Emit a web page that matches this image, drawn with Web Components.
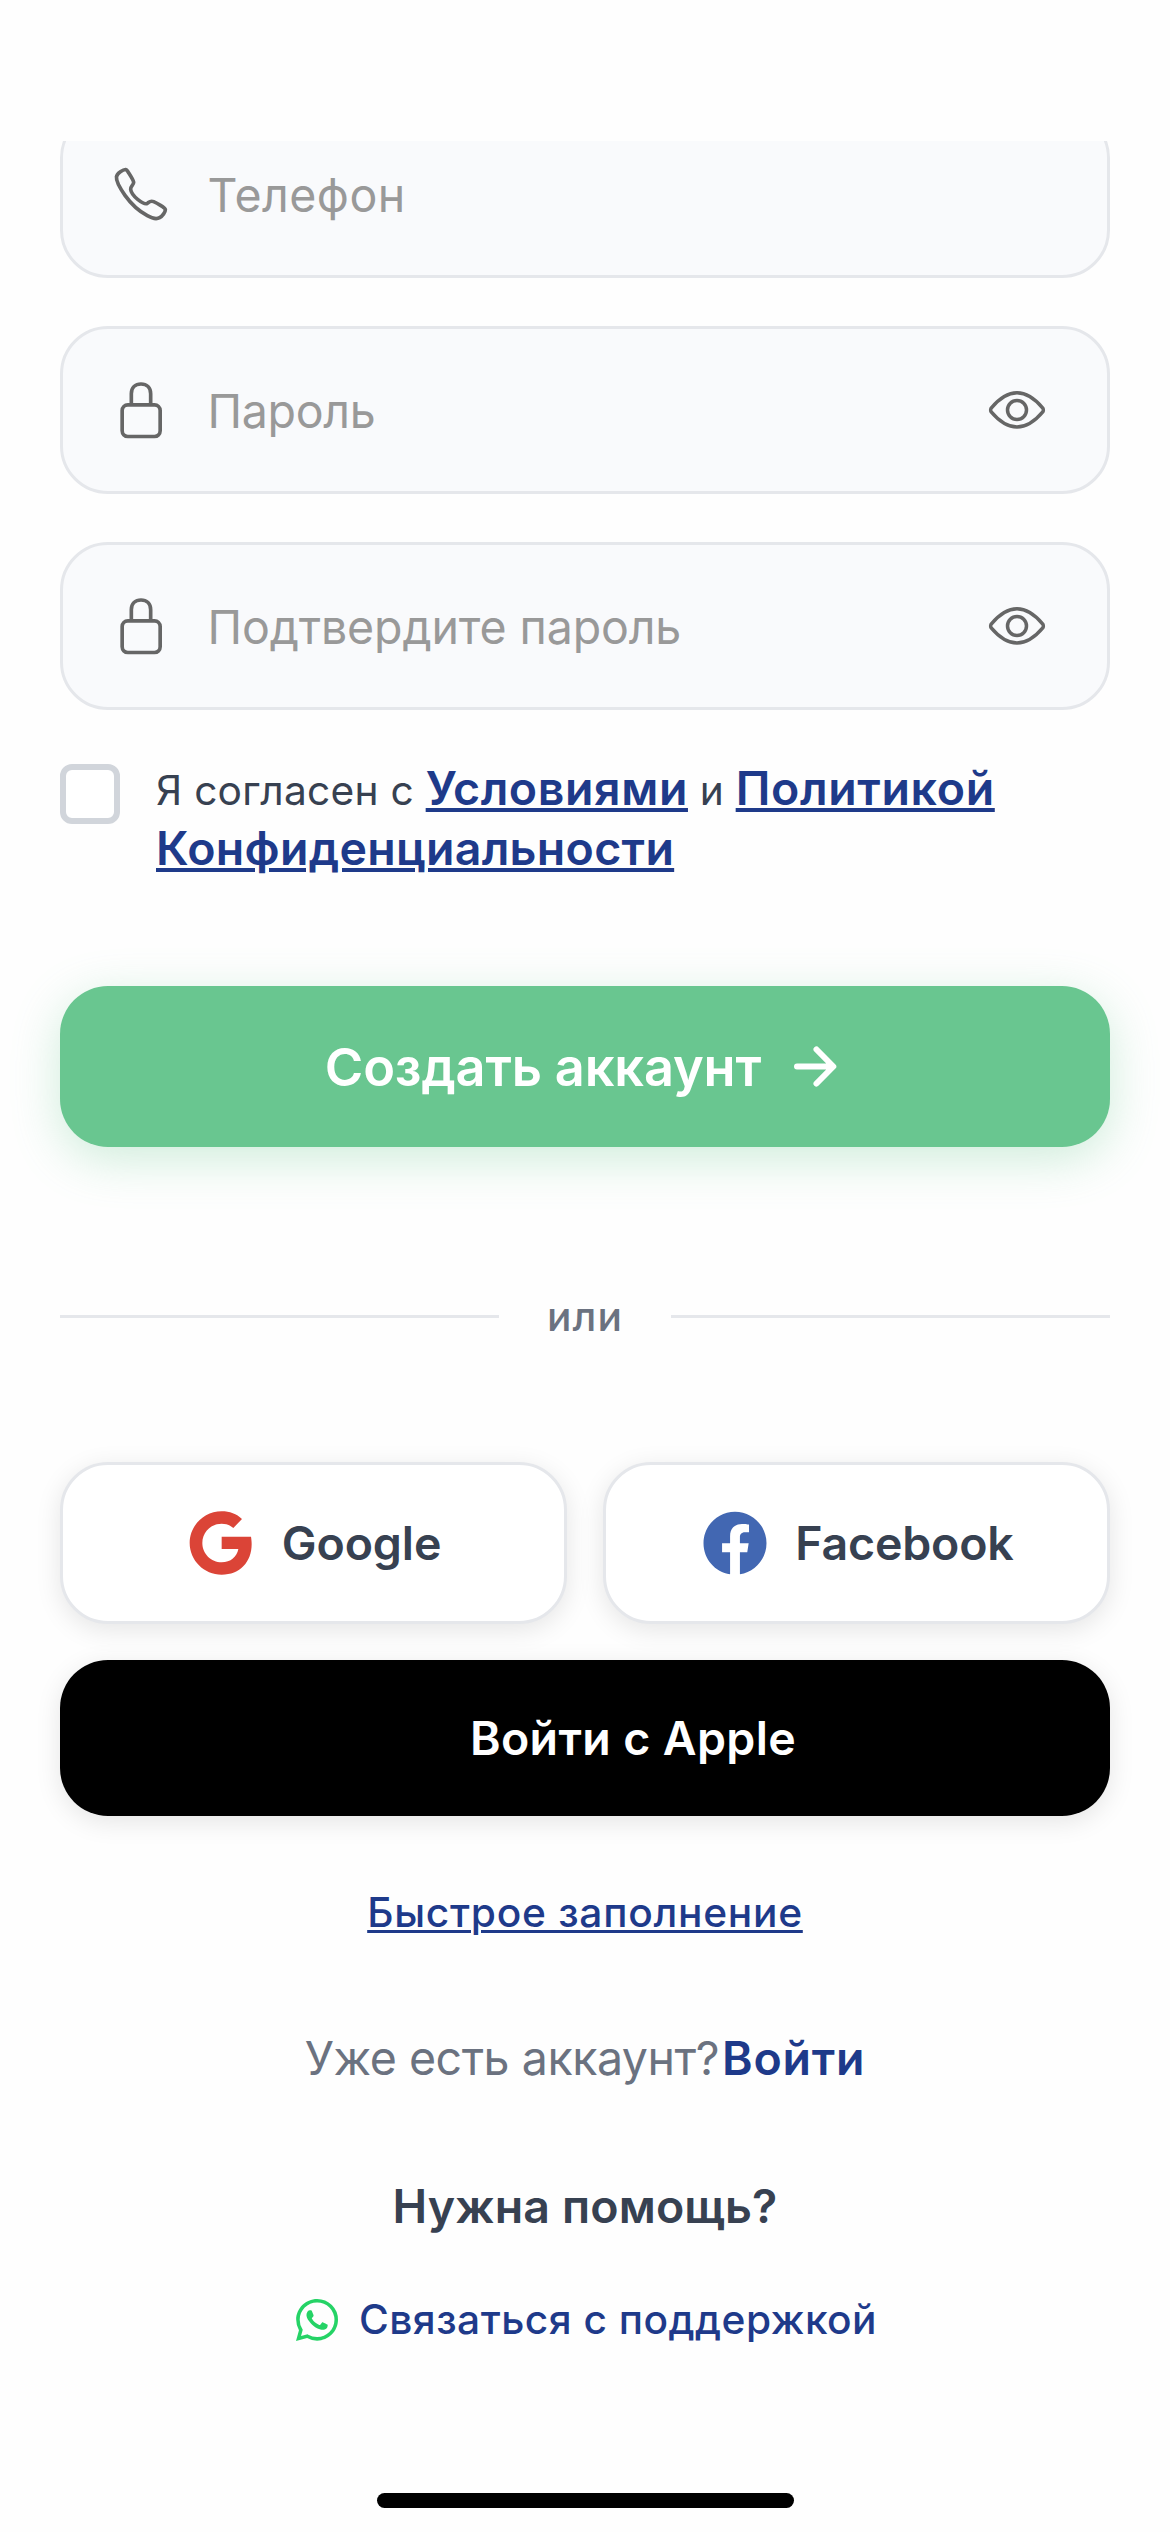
<!DOCTYPE html>
<html lang="ru">
<head>
<meta charset="utf-8">
<title>Создать аккаунт</title>
<style>
  html, body { margin: 0; padding: 0; background: #fff; }
  body { font-family: Inter, "Liberation Sans", sans-serif; color: #374151; }
</style>
</head>
<body>
<sign-up-screen></sign-up-screen>

<script>
const define = (name, html) => {
  const tpl = document.createElement('template');
  tpl.innerHTML = html;
  customElements.define(name, class extends HTMLElement {
    constructor() {
      super();
      this.attachShadow({ mode: 'open' }).appendChild(tpl.content.cloneNode(true));
    }
  });
};

const icons = {
  phone: { size: 60, box: '213 132 180 180', body: `<path fill="none" stroke="#666" stroke-width="11" stroke-linejoin="round" d="M257 148.500C251 148 230 159 229.500 171C228 183 239 203 255 226C275 254 300 275 322 287C336 295 350 298 359 293C368 288 376 276 376 269C375 263 350 249 341 245C331 241 329 245 322 250C315 254 303 246 293 238C282 229 273 217 272 208C271 199 281 196 281 187C280 179 268 162 263 154Q260 149 257 148.500Z"/>` },
  lock: { size: 60, box: '213 779 180 180', body: `<g fill="none" stroke="#666" stroke-width="11"><rect x="246.500" y="853.500" width="114" height="95" rx="17"/><path d="M274 853V820C274 802 286 791 303 791S332 802 332 820V853"/></g>` },
  eye: { size: 60, box: '261 240 180 180', body: `<g fill="none" stroke="#666" stroke-width="10.500" stroke-linejoin="round"><path d="M273 325C299 294 323 278.500 351 278.500S403 294 429 325Q431 330 429 335C403 366 379 381 351 381S299 366 273 335Q271 330 273 325Z"/><circle cx="351" cy="330" r="28.500"/></g>` },
  arrow: { size: 60, box: '787 1036.500 60 60', body: `<path fill="none" stroke="#fff" stroke-width="6" stroke-linecap="round" stroke-linejoin="round" d="M799 1066H835M818.500 1049L835.300 1066L818.500 1083"/>` },
  google: { size: 72, box: '16 21 216 216', body: `<path fill="#DB4437" d="M184 57C168 42 147 34 123 34C70 34 27 77 27 129C27 181 70 224 123 224C178 224 213 186 213 132C213 124 212 116 211 110H123V147H173C169 170 150 187 123 187C91 187 65 161 65 129C65 97 91 71 123 71C137 71 149 76 158 84Z"/>` },
  facebook: { size: 72, box: '0 0 512 512', body: `<path fill="#4267B2" d="M480 257.350c0-123.700-100.300-224-224-224s-224 100.300-224 224c0 111.800 81.900 204.470 189 221.290V322.120h-56.890v-64.770H221V208c0-56.130 33.450-87.160 84.610-87.160 24.510 0 50.150 4.380 50.150 4.380v55.130H327.500c-27.810 0-36.510 17.260-36.510 35v42h62.120l-9.920 64.770H291v156.540c107.100-16.810 189-109.480 189-221.310z"/>` },
  blank: { size: 72, box: '0 0 72 72', body: '' },
  whatsapp: { size: 48, box: '0 0 512 512', body: `<path fill="#25D366" fill-rule="evenodd" d="M414.730 97.100A222.140 222.140 0 00256.940 32C134 32 33.920 131.580 33.870 254a220.610 220.610 0 0029.780 111L32 480l118.250-30.870a223.630 223.630 0 00106.600 27h.090c122.930 0 223-99.590 223.060-222A220.180 220.180 0 00414.730 97.100zM256.940 438.660h-.080a185.750 185.750 0 01-94.360-25.720l-6.770-4-70.170 18.320 18.730-68.090-4.410-7A183.460 183.460 0 0171.530 254c0-101.730 83.210-184.500 185.480-184.500a185 185 0 01185.330 184.640c-.040 101.740-83.210 184.520-185.400 184.520zm101.690-138.190c-5.570-2.780-33-16.200-38.080-18.050s-8.830-2.780-12.540 2.780-14.400 18-17.650 21.750-6.500 4.160-12.070 1.380-23.540-8.630-44.830-27.530c-16.570-14.710-27.750-32.870-31-38.420s-.350-8.560 2.440-11.320c2.510-2.490 5.570-6.480 8.360-9.720s3.720-5.560 5.570-9.260.930-6.940-.460-9.710-12.540-30.080-17.180-41.190c-4.530-10.820-9.120-9.350-12.540-9.520-3.250-.160-7-.200-10.690-.200a20.530 20.530 0 00-14.860 6.940c-5.110 5.560-19.510 19-19.510 46.280s20 53.700 22.760 57.410 39.300 59.730 95.210 83.760a323.110 323.110 0 0031.780 11.680c13.350 4.220 25.500 3.630 35.100 2.200 10.710-1.590 33-13.420 37.630-26.380s4.640-24.060 3.250-26.370-5.110-3.710-10.690-6.480z"/>` }
};

customElements.define('app-icon', class extends HTMLElement {
  constructor() { super(); this.attachShadow({ mode: 'open' }); }
  connectedCallback() {
    const i = icons[this.getAttribute('name')];
    this.shadowRoot.innerHTML = `<style>:host{display:block;flex:none;width:${i.size}px;height:${i.size}px}svg{display:block}</style>
      <svg width="${i.size}" height="${i.size}" viewBox="${i.box}" aria-hidden="true">${i.body}</svg>`;
  }
});

define('form-field', `
  <style>
    :host { display: flex; align-items: center; box-sizing: border-box; height: 168px; padding: 0 60px 0 48px;
      border: 3px solid #e5e7eb; border-radius: 48px; background: #f9fafc; }
    .label { flex: 1; margin-left: 36.5px; padding-top: 1px; font-size: 46.5px; line-height: 60px; color: #999; white-space: nowrap; letter-spacing: var(--ls, 0); }
  </style>
  <slot name="icon"></slot><span class="label"><slot></slot></span><slot name="action"></slot>`);

define('agree-row', `
  <style>
    :host { display: flex; gap: 36px; align-items: flex-start; height: 120px; }
    .box { flex: none; box-sizing: border-box; width: 60px; height: 60px; margin-top: 3px; border: 6px solid #d1d5db; border-radius: 12px; background: #fff; }
    p { margin: 0; font-size: 40.7px; line-height: 60px; letter-spacing: .25px; }
  </style>
  <span class="box"></span><p><slot></slot></p>`);

define('text-link', `
  <style>
    :host { display: inline; font-size: 46.5px; font-weight: 600; line-height: 46px; color: #1e3a8a; letter-spacing: var(--ls, .6px);
      text-decoration: underline; text-decoration-thickness: var(--thick, 4px); text-underline-offset: 3px; }
    :host([plain]) { text-decoration: none; }
    :host([small]) { font-size: 40.7px; font-weight: 500; line-height: 60px; }
  </style><slot></slot>`);

define('primary-button', `
  <style>
    :host { display: flex; align-items: center; justify-content: center; gap: 24px; height: 161px; border-radius: 48px;
      background: #69c690; color: #fff; font-size: 52.3px; font-weight: 600; letter-spacing: -.15px; white-space: nowrap;
      box-shadow: 0 12px 48px rgba(105, 198, 144, .32); }
  </style><span><slot></slot></span><app-icon name="arrow"></app-icon>`);

define('or-divider', `
  <style>
    :host { display: flex; align-items: center; gap: 48px; height: 61px; font-size: 40.7px; font-weight: 500; line-height: 61px; color: #6b7280; letter-spacing: 1.1px; }
    i { flex: 1; height: 3px; background: #e5e7eb; }
  </style><i></i><span><slot></slot></span><i></i>`);

define('social-button', `
  <style>
    :host { display: flex; flex: 1; align-items: center; justify-content: center; gap: 24px; box-sizing: border-box; height: 162px;
      border: 3px solid #e5e7eb; border-radius: 48px; background: #fff; font-size: 46.5px; font-weight: 600; white-space: nowrap;
      letter-spacing: var(--ls, -.1px); box-shadow: 0 6px 26px rgba(0, 0, 0, .1); }
    :host([dark]) { flex: none; height: 156px; border: 0; background: #000; color: #fff; }
  </style><slot name="icon"></slot><span><slot></slot></span>`);

define('center-line', `
  <style>
    :host { display: flex; align-items: center; justify-content: center; height: 60px; line-height: 60px; font-size: 46.5px; white-space: nowrap; gap: var(--gap, 0); }
  </style><slot></slot>`);

define('sign-up-screen', `
  <style>
    :host { display: flex; flex-direction: column; width: 1170px; height: 2532px; overflow: hidden; background: #fefefe; }
    header { flex: none; height: 141px; }
    main { flex: 1; overflow: hidden; padding: 0 60px; }
    form { display: flex; flex-direction: column; margin-top: -31px; }
    .fields { display: flex; flex-direction: column; gap: 48px; }
    agree-row { margin-top: 51px; }
    primary-button { margin-top: 105px; }
    or-divider { margin-top: 139px; }
    .social { display: flex; flex-direction: column; gap: 36px; margin-top: 115px; }
    .pair { display: flex; gap: 36px; }
    .quick { margin-top: 67px; }
    .login { margin-top: 85px; --gap: 3px; color: #6b7280; }
    .login span { letter-spacing: -.46px; }
    .help { margin-top: 88px; font-weight: 600; letter-spacing: .13px; }
    .support { margin-top: 54px; --gap: 18px; }
    .home { width: 417px; height: 15px; margin: 143px auto 0; border-radius: 8px; background: #000; }
  </style>
  <header></header>
  <main>
    <form>
      <div class="fields">
        <form-field style="--ls:.5px"><app-icon slot="icon" name="phone"></app-icon>Телефон</form-field>
        <form-field style="--ls:-.3px"><app-icon slot="icon" name="lock"></app-icon>Пароль<app-icon slot="action" name="eye"></app-icon></form-field>
        <form-field style="--ls:-.14px"><app-icon slot="icon" name="lock"></app-icon>Подтвердите пароль<app-icon slot="action" name="eye"></app-icon></form-field>
      </div>
      <agree-row>Я согласен с <text-link>Условиями</text-link> и <text-link style="--ls:.65px">Политикой</text-link> <text-link style="--ls:.3px">Конфиденциальности</text-link></agree-row>
      <primary-button>Создать аккаунт</primary-button>
      <or-divider>или</or-divider>
      <div class="social">
        <div class="pair">
          <social-button><app-icon slot="icon" name="google"></app-icon>Google</social-button>
          <social-button style="--ls:-.2px"><app-icon slot="icon" name="facebook"></app-icon>Facebook</social-button>
        </div>
        <social-button dark style="--ls:.37px"><app-icon slot="icon" name="blank"></app-icon>Войти с Apple</social-button>
      </div>
      <center-line class="quick"><text-link small style="--ls:.72px;--thick:3px">Быстрое заполнение</text-link></center-line>
      <center-line class="login"><span>Уже есть аккаунт?</span><text-link plain style="--ls:.75px">Войти</text-link></center-line>
      <center-line class="help">Нужна помощь?</center-line>
      <center-line class="support"><app-icon name="whatsapp"></app-icon><text-link small plain style="--ls:.47px">Связаться с поддержкой</text-link></center-line>
    </form>
    <div class="home"></div>
  </main>`);
</script>
</body>
</html>
